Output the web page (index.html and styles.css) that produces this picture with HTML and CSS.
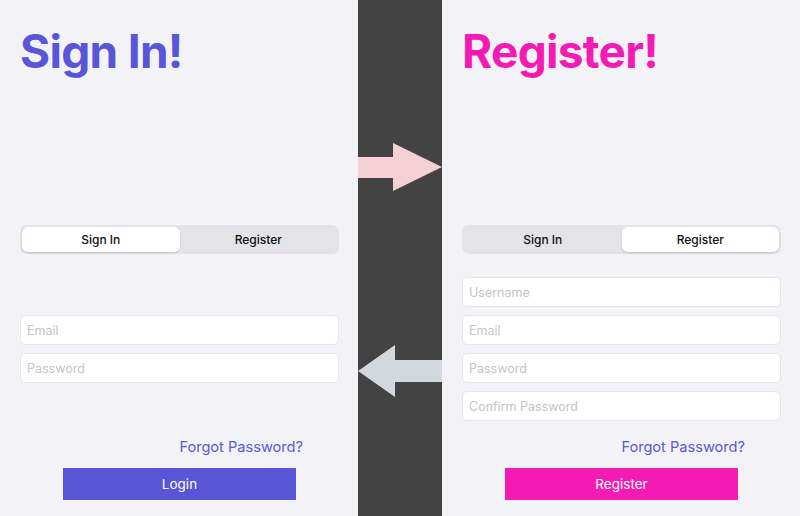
FILE: index.html
```html
<!DOCTYPE html>
<html>
<head>
<meta charset="utf-8">
<link rel="stylesheet" href="styles.css">
</head>
<body>
<div class="screen">
  <section class="panel">
    <h1 class="title title-signin">Sign In!</h1>
    <div class="segmented">
      <div class="seg seg-active">Sign In</div>
      <div class="seg">Register</div>
    </div>
    <div class="fields">
      <input class="field" placeholder="Email">
      <input class="field" placeholder="Password">
    </div>
    <div class="forgot-row"><span class="forgot">Forgot Password?</span></div>
    <div class="btn btn-login">Login</div>
  </section>
  <div class="divider">
    <svg class="arrows" width="84" height="516" viewBox="0 0 84 516">
      <polygon fill="#f5d1d7" points="0,157 35,157 35,143 84,167 35,191 35,178 0,178"/>
      <polygon fill="#d3d7de" points="0,371 37,345 37,360 84,360 84,382 37,382 37,397"/>
    </svg>
  </div>
  <section class="panel">
    <h1 class="title title-register">Register!</h1>
    <div class="segmented">
      <div class="seg">Sign In</div>
      <div class="seg seg-active">Register</div>
    </div>
    <div class="fields">
      <input class="field" placeholder="Username">
      <input class="field" placeholder="Email">
      <input class="field" placeholder="Password">
      <input class="field" placeholder="Confirm Password">
    </div>
    <div class="forgot-row"><span class="forgot">Forgot Password?</span></div>
    <div class="btn btn-register">Register</div>
  </section>
</div>
</body>
</html>
```

FILE: styles.css
```css
* { box-sizing: border-box; }
html, body { margin: 0; padding: 0; }
body {
  font-family: Inter, "Noto Sans", sans-serif;
  background: #f2f2f7;
  width: 800px;
  height: 516px;
  overflow: hidden;
}
.screen {
  display: flex;
  width: 800px;
  height: 516px;
}
.panel {
  width: 358px;
  display: flex;
  flex-direction: column;
  padding: 0 19px 0 20px;
  background: #f2f2f7;
}
.divider {
  width: 84px;
  background: #434343;
}
.arrows { display: block; }
.title {
  margin: 23px 0 0 0;
  font-size: 46px;
  font-weight: 700;
  line-height: 56px;
  letter-spacing: -0.7px;
}
.title-signin { color: #5856d6; }
.title-register { color: #f31bb4; }
.segmented {
  margin-top: 146px;
  height: 29px;
  background: #e3e3e8;
  border-radius: 7px;
  padding: 2px 2px;
  display: flex;
}
.seg {
  flex: 1;
  display: flex;
  align-items: center;
  justify-content: center;
  font-size: 12px;
  font-weight: 500;
  color: #111;
  border-radius: 6px;
}
.seg-active {
  background: #fff;
  box-shadow: 0 1px 2px rgba(0,0,0,0.15);
}
.fields {
  margin-top: 7px;
  height: 176px;
  display: flex;
  flex-direction: column;
  justify-content: center;
  gap: 8px;
}
.field {
  height: 30px;
  width: 100%;
  border: 1px solid #e6e6eb;
  border-radius: 5px;
  background: #fff;
  font-family: Inter, "Noto Sans", sans-serif;
  font-size: 12.5px;
  padding: 0 6px;
  outline: none;
}
.field::placeholder { color: #c4c4c7; }
.forgot-row {
  display: flex;
  justify-content: flex-end;
  padding-right: 36px;
  height: 20px;
}
.forgot {
  font-size: 14.6px;
  line-height: 20px;
  color: #5a58d6;
}
.btn {
  margin: 11px auto 0;
  width: 233px;
  height: 32px;
  display: flex;
  align-items: center;
  justify-content: center;
  color: #fff;
  font-size: 13.5px;
}
.btn-login { background: #5856d6; }
.btn-register { background: #f31bb4; }
```
